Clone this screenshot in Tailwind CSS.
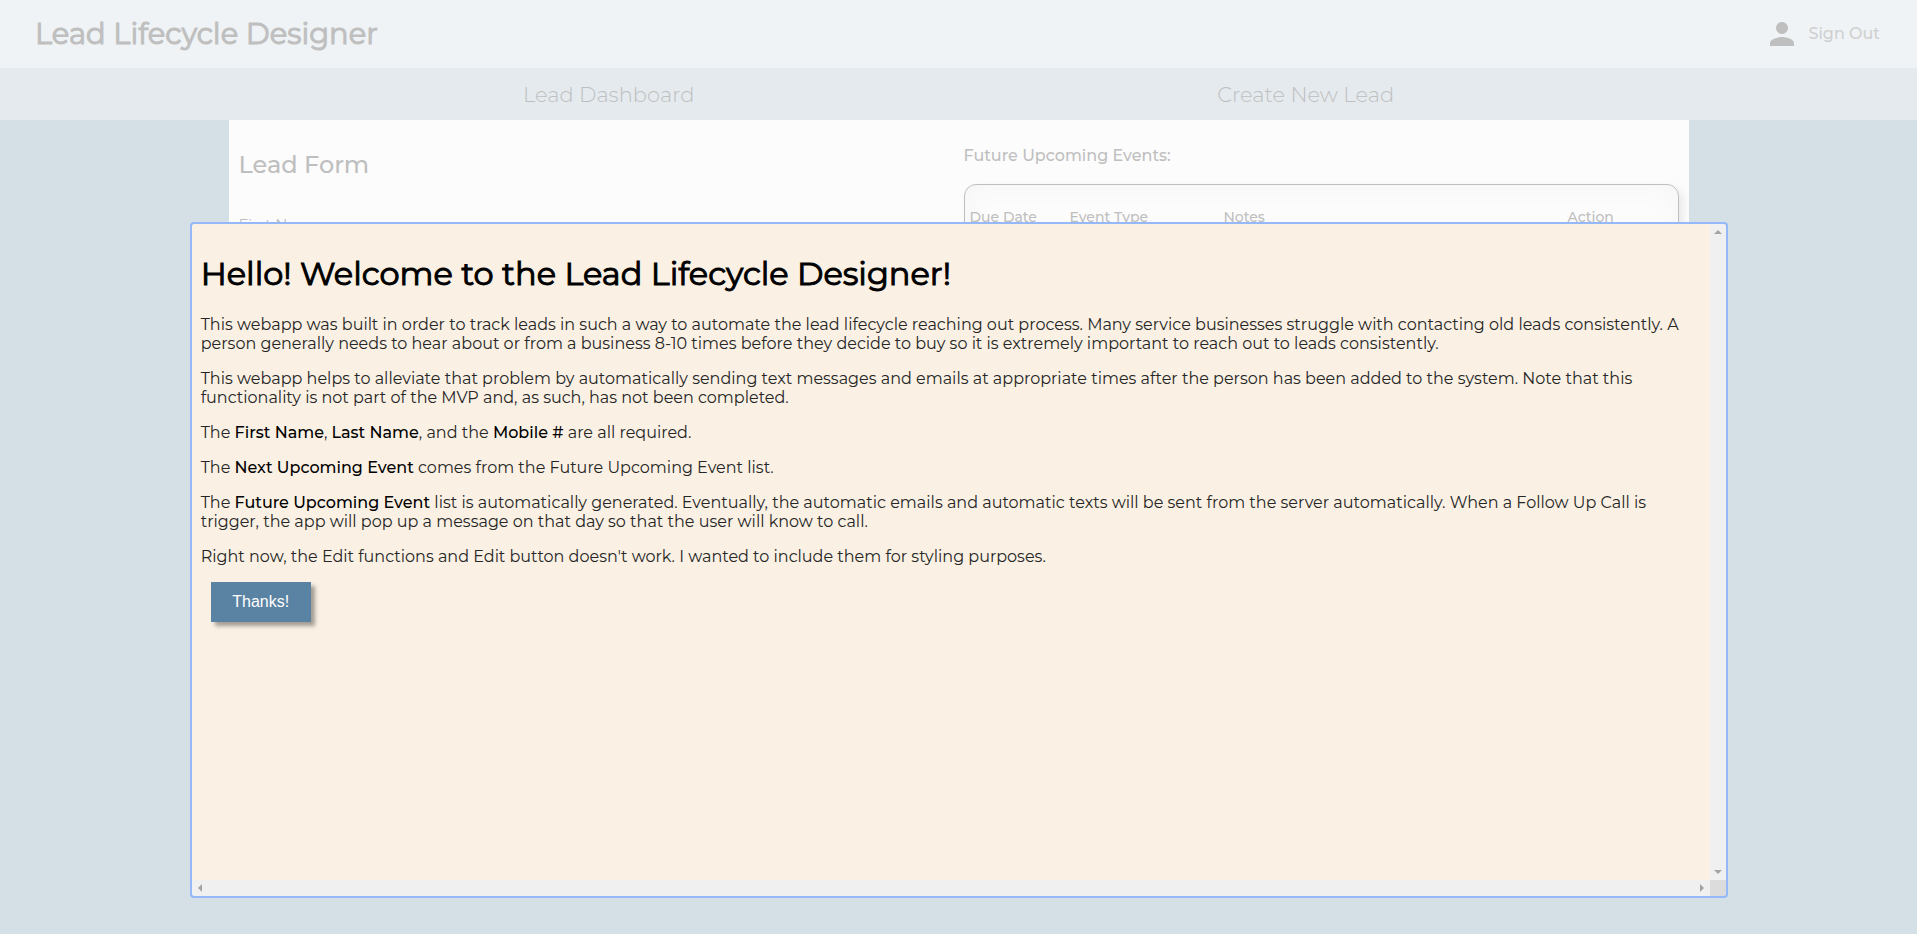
<!DOCTYPE html>
<html lang="en">
<head>
<meta charset="utf-8">
<meta name="viewport" content="width=device-width, initial-scale=1">
<title>Lead Lifecycle Designer</title>
<script src="https://cdn.jsdelivr.net/npm/@tailwindcss/browser@4"></script>
</head>
<body class="min-h-screen overflow-hidden bg-[#d5e0e6] font-['Montserrat',Inter,sans-serif] text-base font-light text-[#bfbfbf]">

<header class="flex h-17 items-center justify-between bg-[#eff3f6] pl-[35px] pr-[37px]">
  <h1 class="text-[29px] font-normal leading-9 [-webkit-text-stroke:1px]">Lead Lifecycle Designer</h1>
  <a href="#" class="flex items-center gap-2 text-base font-medium text-[#d0d0d0]">
    <svg class="size-9 text-[#bfbfbf]" viewBox="0 0 24 24" fill="currentColor" aria-hidden="true"><path d="M12 12c2.21 0 4-1.79 4-4s-1.790-4-4-4-4 1.790-4 4 1.790 4 4 4zm0 2c-2.670 0-8 1.340-8 4v2h16v-2c0-2.660-5.330-4-8-4z"/></svg>
    Sign Out
  </a>
</header>

<nav class="flex h-13 items-center justify-evenly bg-[#e5eaee] pt-0.5 text-[21px] leading-7">
  <a href="#">Lead Dashboard</a>
  <a href="#">Create New Lead</a>
</nav>

<main class="mx-auto grid w-[1460px] max-w-full grid-cols-2 bg-[#fcfcfc] pb-96 pl-2.5 pr-2.5">
  <section class="pt-[29px]">
    <h2 class="text-2xl font-medium leading-8">Lead Form</h2>
    <label for="first" class="mt-8 block text-[15px] font-normal leading-6">First Name</label>
    <input id="first" type="text" class="mt-1 block w-64 border border-[#bfbfbf]">
  </section>
  <section class="pl-1.25 pt-6">
    <h2 class="text-base font-medium leading-6">Future Upcoming Events:</h2>
    <div class="mt-4 h-64 rounded-xl border border-[#bfbfbf] px-1.25 pt-5 shadow-[4px_4px_8px_rgba(0,0,0,0.08),inset_0_0_32px_rgba(0,0,0,0.03)]">
      <table class="w-full table-fixed text-left text-sm leading-6">
        <thead>
          <tr>
            <th class="w-[100px] font-medium">Due Date</th>
            <th class="w-[154px] font-medium">Event Type</th>
            <th class="font-medium">Notes</th>
            <th class="w-[105px] font-medium">Action</th>
          </tr>
        </thead>
      </table>
    </div>
  </section>
</main>

<div role="dialog" aria-modal="true" aria-labelledby="welcome" class="fixed bottom-[38px] left-[10%] right-[191px] top-[24%] grid grid-cols-[1fr_16px] grid-rows-[1fr_16px] rounded-xs bg-[#f0f0f0] text-black outline-2 outline-[#94b8f8]">
  <div class="overflow-hidden bg-[#faf1e4] pl-[9px] pr-2 pt-[30px]">
    <h1 id="welcome" class="mb-[21px] text-[32px] font-normal leading-10 [-webkit-text-stroke:1px]">Hello! Welcome to the Lead Lifecycle Designer!</h1>
    <div class="flex flex-col gap-4 text-base font-normal leading-[19px] text-[#262626]">
      <p>This webapp was built in order to track leads in such a way to automate the lead lifecycle reaching out process. Many service businesses struggle with contacting old leads consistently. A person generally needs to hear about or from a business 8-10 times before they decide to buy so it is extremely important to reach out to leads consistently.</p>
      <p>This webapp helps to alleviate that problem by automatically sending text messages and emails at appropriate times after the person has been added to the system. Note that this functionality is not part of the MVP and, as such, has not been completed.</p>
      <p>The <b class="font-medium text-black">First Name</b>, <b class="font-medium text-black">Last Name</b>, and the <b class="font-medium text-black">Mobile #</b> are all required.</p>
      <p>The <b class="font-medium text-black">Next Upcoming Event</b> comes from the Future Upcoming Event list.</p>
      <p>The <b class="font-medium text-black">Future Upcoming Event</b> list is automatically generated. Eventually, the automatic emails and automatic texts will be sent from the server automatically. When a Follow Up Call is trigger, the app will pop up a message on that day so that the user will know to call.</p>
      <p>Right now, the Edit functions and Edit button doesn't work. I wanted to include them for styling purposes.</p>
    </div>
    <button type="button" class="ml-2.5 mt-4 h-10 w-25 bg-[#5a83a3] font-['Liberation_Sans',sans-serif] text-base font-normal text-white shadow-[4px_4px_4px_rgba(0,0,0,0.35)]">Thanks!</button>
  </div>
  <div class="flex flex-col items-center justify-between py-1.5 text-[#a3a3a3]" aria-hidden="true">
    <svg class="h-1 w-2" viewBox="0 0 8 4" fill="currentColor"><path d="M0 4 4 0l4 4z"/></svg>
    <svg class="h-1 w-2" viewBox="0 0 8 4" fill="currentColor"><path d="M0 0l4 4 4-4z"/></svg>
  </div>
  <div class="flex items-center justify-between px-1.5 text-[#a3a3a3]" aria-hidden="true">
    <svg class="h-2 w-1" viewBox="0 0 4 8" fill="currentColor"><path d="M4 0 0 4l4 4z"/></svg>
    <svg class="h-2 w-1" viewBox="0 0 4 8" fill="currentColor"><path d="M0 0l4 4-4 4z"/></svg>
  </div>
  <div class="bg-[#dcdcdc]"></div>
</div>
</body>
</html>
